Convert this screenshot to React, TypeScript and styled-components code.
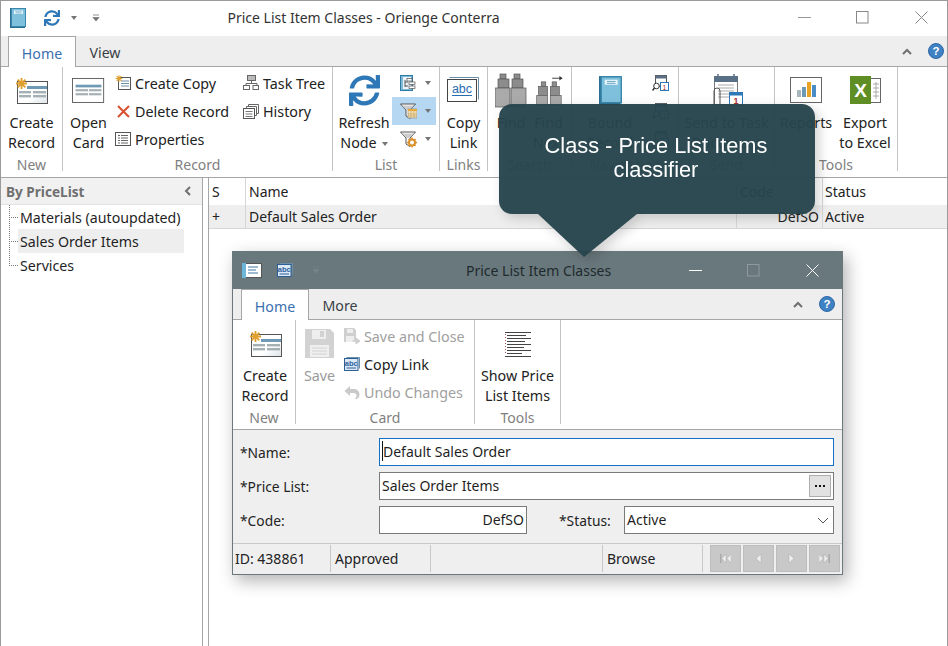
import React from "react";
import styled, { createGlobalStyle } from "styled-components";
import { FaSync } from "react-icons/fa";

const Global = createGlobalStyle`
  html, body { margin: 0; padding: 0; background: #fff; }
  body { width: 948px; height: 646px; overflow: hidden; font-family: "Noto Sans", "Open Sans", sans-serif; font-size: 14px; color: #1f1f1f; }
  * { box-sizing: border-box; }
`;

const Win = styled.div`
  position: relative; width: 948px; height: 646px; background: #fff;
  border: 1px solid #9a9a9a; border-bottom: 0; display: flex; flex-direction: column; overflow: hidden;
`;
const TitleBar = styled.div<{ $h: number; $bg: string; $pb?: number }>`
  height: ${(p) => p.$h}px; flex: none; background: ${(p) => p.$bg}; display: flex; align-items: center; position: relative;
  padding-bottom: ${(p) => p.$pb ?? 0}px;
`;
const QuickTools = styled.div<{ $w: number }>`
  width: ${(p) => p.$w}px; display: flex; align-items: center; flex: none;
`;
const QuickSlot = styled.span<{ $w: number }>`
  width: ${(p) => p.$w}px; display: flex; justify-content: center; flex: none;
`;
const TitleText = styled.div<{ $w: number; $c: string }>`
  width: ${(p) => p.$w}px; flex: none; text-align: center; color: ${(p) => p.$c}; font-size: 14px; white-space: nowrap;
`;
const Caption = styled.div`
  margin-left: auto; display: flex; align-items: center; height: 100%;
`;
const CaptionBtn = styled.span<{ $w: number }>`
  width: ${(p) => p.$w}px; display: flex; justify-content: center; align-items: center;
`;
const TabStrip = styled.div<{ $h: number; $pad: number }>`
  height: ${(p) => p.$h}px; flex: none; background: #eeeeee; border-bottom: 1px solid #a6a6a6;
  display: flex; align-items: flex-end; padding-left: ${(p) => p.$pad}px;
`;
const Tab = styled.div<{ $active?: boolean; $w: number }>`
  width: ${(p) => p.$w}px; height: calc(100% + 1px); margin-bottom: -1px; display: flex; align-items: center; justify-content: center;
  font-size: 14.2px; padding-top: 2px;
  color: ${(p) => (p.$active ? "#3b6fb0" : "#3a3f46")};
  background: ${(p) => (p.$active ? "#fff" : "transparent")};
  ${(p) => (p.$active ? "border: 1px solid #a6a6a6; border-bottom: 0;" : "")}
`;
const TabRight = styled.div<{ $r: number }>`
  margin-left: auto; align-self: center; display: flex; align-items: center; gap: 16px; padding-right: ${(p) => p.$r}px;
`;
const Ribbon = styled.div<{ $h: number }>`
  height: ${(p) => p.$h}px; flex: none; border-bottom: 1px solid #a6a6a6; background: #fff; display: flex; align-items: flex-start; overflow: hidden;
`;
const Group = styled.div<{ $w: number }>`
  width: ${(p) => p.$w}px; height: 104px; flex: none; border-right: 1px solid #c4c4c4; display: flex; flex-direction: column;
`;
const GroupBody = styled.div`
  flex: 1; min-height: 0; display: flex; align-items: flex-start; white-space: nowrap;
`;
const GroupLabel = styled.div`
  height: 12px; flex: none; text-align: center; color: #7f7f7f; font-size: 14px; line-height: 12px;
`;
const BigBtn = styled.div<{ $w: number; $off?: boolean; $pl?: number }>`
  width: ${(p) => p.$w}px; flex: none; display: flex; flex-direction: column; align-items: center;
  padding-left: ${(p) => p.$pl ?? 0}px;
  color: ${(p) => (p.$off ? "#9a9a9a" : "#222")};
`;
const BigLabel = styled.div`
  font-size: 14.3px; line-height: 20px; text-align: center;
`;
const BigIcon = styled.div`
  height: 46px; width: 100%; display: flex; align-items: center; justify-content: center; flex: none;
`;
const SmallCol = styled.div<{ $w: number }>`
  width: ${(p) => p.$w}px; flex: none; display: flex; flex-direction: column; padding-top: 2px;
`;
const SmallRow = styled.div<{ $off?: boolean; $hl?: boolean }>`
  height: 28px; display: flex; align-items: center; gap: 3px; font-size: 14.3px; color: ${(p) => (p.$off ? "#a0a0a0" : "#222")};
  background: ${(p) => (p.$hl ? "#b5d7f1" : "transparent")};
`;
const SmallIcon = styled.span<{ $ml?: number }>`
  width: 18px; height: 18px; flex: none; display: flex; align-items: center; justify-content: center; margin-left: ${(p) => p.$ml ?? 0}px;
`;
const DropMark = styled.span<{ $ml: number }>`
  width: 0; height: 0; border-left: 3.5px solid transparent; border-right: 3.5px solid transparent; border-top: 4px solid #757575; margin-left: ${(p) => p.$ml}px; flex: none;
  display: inline-block; vertical-align: middle;
`;
const Main = styled.div`
  flex: 1; min-height: 0; display: flex;
`;
const Side = styled.div`
  width: 202px; flex: none; border-right: 1px solid #a6a6a6; display: flex; flex-direction: column;
`;
const SideHead = styled.div`
  height: 27px; flex: none; background: #f1f1f1; border-bottom: 1px solid #e2e2e2; display: flex; align-items: center; justify-content: space-between;
  padding: 0 11px 0 5px; font-weight: 700; color: #6f6f6f; font-size: 13.6px;
`;
const Tree = styled.div`
  padding-left: 8px; padding-right: 18px;
`;
const TreeRow = styled.div`
  height: 24px; display: flex; align-items: center; font-size: 14.2px; color: #1f1f1f;
`;
const Connector = styled.span<{ $last?: boolean }>`
  width: 9px; align-self: stretch; flex: none;
  background-image:
    repeating-linear-gradient(to bottom, #777 0 1px, transparent 1px 2px),
    repeating-linear-gradient(to right, #777 0 1px, transparent 1px 2px);
  background-size: 1px ${(p) => (p.$last ? "50%" : "100%")}, 100% 1px;
  background-position: 0 0, 0 50%;
  background-repeat: no-repeat;
`;
const TreeText = styled.span<{ $sel?: boolean }>`
  flex: 1; align-self: stretch; display: flex; align-items: center; padding-left: 2px; background: ${(p) => (p.$sel ? "#eeeeee" : "transparent")};
`;
const Grid = styled.div`
  flex: 1; margin-left: 5px; border-left: 1px solid #a6a6a6; min-width: 0;
`;
const GridRow = styled.div<{ $head?: boolean }>`
  display: grid; grid-template-columns: 37px 491px 86px 1fr; height: ${(p) => (p.$head ? 27 : 24)}px;
  background: ${(p) => (p.$head ? "#fff" : "#eeeeee")}; border-bottom: ${(p) => (p.$head ? "none" : "1px solid #d6d6d6")};
`;
const Cell = styled.div<{ $right?: boolean }>`
  border-right: 1px solid #d6d6d6; display: flex; align-items: center; padding: 0 3px 0 3px; font-size: 14px; color: #222;
  justify-content: ${(p) => (p.$right ? "flex-end" : "flex-start")};
  &:last-child { border-right: 0; padding-left: 2px; }
`;
const Bubble = styled.div`
  position: absolute; left: 498px; top: 103px; width: 316px; height: 110px; border-radius: 13px;
  background: rgba(38, 69, 77, 0.96); color: #fff; font-family: "Liberation Sans", Arial, sans-serif; font-size: 21.8px; line-height: 24px;
  text-align: center; padding: 30px 2px 0 0; z-index: 3;
  filter: drop-shadow(4px 4px 6px rgba(0,0,0,.18));
  &::after {
    content: ""; position: absolute; left: 39px; top: 110px; width: 0; height: 0;
    border-left: 46px solid transparent; border-right: 53px solid transparent; border-top: 43px solid rgba(38, 69, 77, 0.96);
  }
`;
const Dialog = styled.div`
  position: absolute; left: 231px; top: 250px; width: 611px; height: 324px; background: #efefef; border: 1px solid #6a787c; border-top: 0;
  box-shadow: 4px 6px 16px rgba(0,0,0,.3); display: flex; flex-direction: column; z-index: 2;
`;
const Form = styled.div`
  flex: 1; min-height: 0; padding: 8px 8px 0 7px; display: flex; flex-direction: column; gap: 6px; background: #efefef;
`;
const FormRow = styled.div`
  height: 28px; display: flex; align-items: center;
`;
const FieldLabel = styled.div<{ $w: number; $pl?: number }>`
  width: ${(p) => p.$w}px; flex: none; font-size: 13.8px; color: #222; padding-left: ${(p) => p.$pl ?? 0}px;
`;
const Input = styled.div<{ $w?: number; $focus?: boolean; $right?: boolean }>`
  ${(p) => (p.$w ? `width:${p.$w}px;flex:none;` : "flex:1;")}
  height: 28px; background: #fff; border: 1px solid ${(p) => (p.$focus ? "#0f72c4" : "#7a7a7a")}; display: flex; align-items: center;
  padding: 0 2px 2px 2px; font-size: 14px; color: #1f1f1f; justify-content: ${(p) => (p.$right ? "flex-end" : "space-between")};
`;
const InputValue = styled.span`
  display: flex; align-items: center;
`;
const Caret = styled.span`
  width: 1px; height: 20px; background: #111; flex: none;
`;
const Lookup = styled.span`
  width: 22px; height: 22px; background: #e1e1e1; border: 1px solid #adadad; display: flex; align-items: center; justify-content: center; gap: 2px; flex: none; margin-bottom: -2px;
`;
const Dot = styled.i`
  width: 2px; height: 2px; background: #111; display: block;
`;
const StatusBar = styled.div`
  height: 31px; flex: none; border-top: 1px solid #c8c8c8; display: flex; align-items: stretch;
`;
const StatusCell = styled.div<{ $w: number; $pl?: number }>`
  width: ${(p) => p.$w}px; flex: none; margin: 1px 0 2px; border-right: 1px solid #c8c8c8; display: flex; align-items: center;
  padding-left: ${(p) => p.$pl ?? 4}px; font-size: 14px; color: #222; white-space: nowrap;
`;
const NavGroup = styled.div`
  display: flex; gap: 2px; padding: 1px 0 2px 7px;
`;
const NavBtn = styled.span`
  width: 31px; height: 27px; background: #c8c8c8; border: 1px solid #bdbdbd; display: flex; align-items: center; justify-content: center;
`;

/* ---------- icons ---------- */
const Book = ({ w, h }: { w: number; h: number }) => (
  <svg width={w} height={h} viewBox="0 0 16 20" style={{ display: "block" }}>
    <rect x="0" y="0" width="15" height="20" fill="#2a6f92" />
    <rect x="1.500" y=".5" width="14" height="18" fill="#7fc0dc" stroke="#3a87ab" />
    <rect x="4" y="2.500" width="9" height="3.500" fill="#e8f5fb" />
    <path d="M5.500 3.700h6M5.500 5h6" stroke="#5a9cbb" strokeWidth=".6" />
  </svg>
);
const Refresh = ({ size }: { size: number }) => <FaSync size={size} color="#2f78b7" />;
const Star = ({ x, y, r }: { x: number; y: number; r: number }) => (
  <g stroke="#e0a030" strokeWidth={r * 0.34} transform={`translate(${x} ${y})`}>
    <path d={`M${-r} 0H${r}M0 ${-r}V${r}M${-r * 0.7} ${-r * 0.7}L${r * 0.7} ${r * 0.7}M${-r * 0.7} ${r * 0.7}L${r * 0.7} ${-r * 0.7}`} />
  </g>
);
const NewRecord = () => (
  <svg width="33" height="27" viewBox="0 0 33 27">
    <defs><linearGradient id="g1" x1="0" y1="0" x2="1" y2="1"><stop offset=".6" stopColor="#fff" /><stop offset="1" stopColor="#dde4ea" /></linearGradient></defs>
    <rect x="2.500" y="4.500" width="30" height="22" fill="url(#g1)" stroke="#555" />
    <g transform="translate(-1 2)"><rect x="13" y="7" width="20" height="3" fill="#6f9ab5" /><rect x="5" y="12" width="12" height="2.400" fill="#a4b0b4" /><rect x="19" y="12" width="13" height="2.400" fill="#a4b0b4" /><rect x="5" y="16" width="12" height="2.400" fill="#a4b0b4" /><rect x="19" y="16" width="13" height="2.400" fill="#a4b0b4" /></g>
    <Star x={6.500} y={6.500} r={5.500} />
  </svg>
);
const OpenCard = () => (
  <svg width="33" height="27" viewBox="0 0 37 30">
    <rect x=".5" y="1.500" width="35" height="27" fill="#fff" stroke="#555" />
    <rect x="4" y="8.500" width="29" height="3" fill="#6f9ab5" />
    <rect x="4" y="13.500" width="14" height="2.400" fill="#a4b0b4" /><rect x="19" y="13.500" width="14" height="2.400" fill="#a4b0b4" />
    <rect x="4" y="18" width="14" height="2.400" fill="#a4b0b4" /><rect x="19" y="18" width="14" height="2.400" fill="#a4b0b4" />
  </svg>
);
const CreateCopy = () => (
  <svg width="17" height="16" viewBox="0 0 17 16">
    <rect x="3.500" y="2.500" width="12" height="12" fill="#fff" stroke="#555" />
    <path d="M6 6h8M6 8.500h8M6 11h8" stroke="#6f8fa5" />
    <Star x={4} y={3.500} r={3.300} />
  </svg>
);
const XMark = () => (
  <svg width="15" height="15" viewBox="0 0 15 15"><path d="M2 2l11 11M13 2L2 13" stroke="#d9502e" strokeWidth="2" /></svg>
);
const Props = () => (
  <svg width="16" height="14" viewBox="0 0 16 14">
    <rect x=".5" y=".5" width="15" height="13" fill="#fff" stroke="#555" />
    <path d="M3 3.500h2M6 3.500h7M3 6h2M6 6h7M3 8.500h2M6 8.500h7M3 11h2M6 11h7" stroke="#666" />
  </svg>
);
const TaskTree = () => (
  <svg width="16" height="16" viewBox="0 0 16 16">
    <rect x="4.500" y=".5" width="8" height="5" fill="#bbb" stroke="#666" />
    <path d="M8.500 5.500v3M3 10.500v-2h11v2" fill="none" stroke="#666" />
    <rect x=".5" y="10.500" width="6" height="4" fill="#fff" stroke="#666" /><rect x="10" y="10.500" width="5.500" height="4" fill="#fff" stroke="#666" />
  </svg>
);
const History = () => (
  <svg width="16" height="15" viewBox="0 0 16 15">
    <path d="M5.500 2.500V.5h10v9h-2" fill="none" stroke="#666" /><path d="M3.500 4.500v-2h10v9h-2" fill="#fff" stroke="#666" />
    <rect x=".5" y="4.500" width="11" height="10" fill="#fff" stroke="#555" />
    <path d="M2.500 7.500h7M2.500 10h7M2.500 12.500h7" stroke="#777" />
  </svg>
);
const TreeDoc = () => (
  <svg width="16" height="16" viewBox="0 0 16 16">
    <rect x=".5" y=".5" width="12" height="15" fill="#7fbbd8" stroke="#2e7aa3" />
    <rect x="3" y="2" width="8" height="12" fill="#eaf4f9" />
    <path d="M5 5v7M5 7h3M5 11h3" stroke="#555" fill="none" />
    <rect x="7" y="3.500" width="5" height="2.500" fill="#fff" stroke="#555" strokeWidth=".7" />
    <rect x="9" y="7" width="6" height="2.500" fill="#fff" stroke="#555" strokeWidth=".7" />
    <rect x="9" y="11" width="6" height="2.500" fill="#fff" stroke="#555" strokeWidth=".7" />
  </svg>
);
const FilterTable = () => (
  <svg width="17" height="17" viewBox="0 0 17 17">
    <path d="M.5 1h15L10 7v8.500L6 13V7z" fill="#fff" stroke="#555" />
    <path d="M2 2.500h12L9 7H7z" fill="#ccc" />
    <rect x="8" y="6" width="9" height="9" fill="#f2e2b8" stroke="#888" strokeWidth=".6" />
    <rect x="8" y="6" width="9" height="2" fill="#e6a83a" />
    <path d="M11 8v7M14 8v7M8 11h9M8 13h9" stroke="#c9a560" strokeWidth=".7" />
  </svg>
);
const FilterGear = () => (
  <svg width="17" height="17" viewBox="0 0 17 17">
    <path d="M.5 1h15L10 7v8.500L6 13V7z" fill="#fff" stroke="#555" />
    <path d="M2 2.500h12L9 7H7z" fill="#ccc" />
    <circle cx="12" cy="11.500" r="3" fill="#fff" stroke="#d9902a" strokeWidth="2" />
    <path d="M12 6.500v2M12 14.500v2M7 11.500h2M15 11.500h2M8.500 8l1.500 1.500M14 13.500l1.500 1.500M15.500 8L14 9.500M10 13.500L8.500 15" stroke="#d9902a" strokeWidth="1.400" />
  </svg>
);
const AbcBig = () => (
  <svg width="33" height="28" viewBox="0 0 33 28">
    <path d="M2.500 1.500h29v22" fill="none" stroke="#6a8ea8" />
    <rect x=".5" y="3.500" width="29" height="22" fill="#fff" stroke="#444" />
    <text x="15" y="17" textAnchor="middle" fontFamily="Liberation Sans, sans-serif" fontSize="12.500" fill="#2a6bb0">abc</text>
    <path d="M5 19.500h20" stroke="#2a6bb0" />
  </svg>
);
const AbcSmall = () => (
  <svg width="16" height="16" viewBox="0 0 16 16">
    <path d="M2.500 1.500h13v11" fill="none" stroke="#6a8ea8" />
    <rect x=".5" y="2.500" width="13.500" height="12" fill="#dce9f5" stroke="#2c5f95" />
    <text x="7.200" y="10.300" textAnchor="middle" fontFamily="Liberation Sans, sans-serif" fontSize="7.500" fontWeight="700" fill="#2a5f9e">abc</text>
    <path d="M2.500 12h9.500" stroke="#2a5f9e" />
  </svg>
);
const Binoculars = ({ arrow }: { arrow?: boolean }) => (
  <svg width="32" height="36" viewBox="0 -2 32 36">
    {arrow && <g><path d="M20 3h11" stroke="#333" /><path d="M28 .5l3.500 2.500-3.500 2.500z" fill="#333" /></g>}
    <g fill="#8c8c8c" stroke="#555" strokeWidth=".7">
      {arrow ? (
        <>
          <rect x="8" y="7" width="5" height="5" /><rect x="20" y="7" width="5" height="5" />
          <rect x="5" y="12" width="10" height="10" /><rect x="18" y="12" width="10" height="10" />
          <rect x="3" y="22" width="12" height="11" fill="#aaa" /><rect x="18" y="22" width="12" height="11" fill="#aaa" />
        </>
      ) : (
        <>
          <rect x="5" y="0" width="6" height="5" /><rect x="19" y="0" width="6" height="5" />
          <rect x="3" y="5" width="11" height="9" /><rect x="17" y="5" width="11" height="9" />
          <rect x="0" y="14" width="15" height="19" fill="#aaa" /><rect x="16" y="14" width="15" height="19" fill="#aaa" />
        </>
      )}
    </g>
  </svg>
);
const CalSearch = () => (
  <svg width="17" height="17" viewBox="0 0 17 17">
    <rect x="3.500" y=".5" width="11" height="11" fill="#fff" stroke="#555" /><rect x="3.500" y=".5" width="11" height="3" fill="#5a7086" />
    <rect x="8.500" y="7.500" width="8" height="8" fill="#fff" stroke="#2f78b7" /><text x="12.500" y="14.500" fontSize="7" textAnchor="middle" fontFamily="Liberation Sans, sans-serif" fill="#a33">1</text>
    <circle cx="4.500" cy="11" r="2.800" fill="#fff" stroke="#333" /><path d="M2.500 13L.5 15.500" stroke="#333" strokeWidth="1.500" />
  </svg>
);
const SendTask = () => (
  <svg width="32" height="33" viewBox="0 0 32 33">
    <rect x="3.500" y="2.500" width="23" height="28" fill="#fff" stroke="#777" />
    <rect x="3" y="2" width="24" height="6" rx="1" fill="#5a7086" />
    <path d="M7 0v4M23 0v4" stroke="#5a7086" strokeWidth="1.500" />
    <path d="M7 11h16M7 14h16M7 17h16M7 20h16M7 23h16" stroke="#aaa" />
    <rect x="18.500" y="18.500" width="13" height="13" fill="#fff" stroke="#2f78b7" /><rect x="18" y="18" width="14" height="3.500" fill="#2f78b7" />
    <text x="25" y="29.500" fontSize="9" textAnchor="middle" fontFamily="Liberation Sans, sans-serif" fontWeight="700" fill="#a33">1</text>
    <path d="M3 32V17a3 3 0 0 1 6 0v14" fill="none" stroke="#555" />
  </svg>
);
const Reports = () => (
  <svg width="33" height="27" viewBox="0 0 33 27">
    <rect x=".5" y=".5" width="31" height="25" fill="#fff" stroke="#666" />
    <rect x="7" y="13" width="4" height="7" fill="#a7b5bd" /><rect x="12" y="10" width="4" height="10" fill="#6f9ab5" />
    <rect x="17" y="5" width="4" height="15" fill="#e9a322" /><rect x="22" y="8" width="4" height="12" fill="#4a8dc6" />
  </svg>
);
const Excel = () => (
  <svg width="31" height="28" viewBox="0 0 31 28">
    <rect x="20.500" y="2.500" width="10" height="24" fill="#fff" stroke="#666" />
    <path d="M23 8h6M23 12h6M23 16h6M23 20h6M26 6v17" stroke="#999" strokeWidth=".8" />
    <rect x="0" y="0" width="21" height="28" fill="#5f8f24" />
    <text x="10.500" y="20.500" fontSize="19" fontWeight="700" textAnchor="middle" fontFamily="Liberation Sans, sans-serif" fill="#fff">X</text>
  </svg>
);
const Chevron = () => (
  <svg width="10" height="7" viewBox="0 0 10 7" style={{ display: "block" }}><path d="M1 6l4-4 4 4" fill="none" stroke="#6f6f6f" strokeWidth="2" /></svg>
);
const Help = () => (
  <svg width="16" height="16" viewBox="0 0 16 16" style={{ display: "block" }}>
    <circle cx="8" cy="8" r="7.500" fill="#3f82c4" stroke="#2d69a6" />
    <text x="8" y="12" textAnchor="middle" fontSize="11.500" fontWeight="700" fontFamily="Liberation Sans, sans-serif" fill="#fff">?</text>
  </svg>
);
const Minimize = ({ c }: { c: string }) => (
  <svg width="13" height="3" viewBox="0 0 13 3" style={{ display: "block" }}><path d="M0 1.500h13" stroke={c} /></svg>
);
const Maximize = ({ c }: { c: string }) => (
  <svg width="13" height="13" viewBox="0 0 13 13" style={{ display: "block" }}><rect x=".5" y=".5" width="11.500" height="11.500" fill="none" stroke={c} /></svg>
);
const Close = ({ c }: { c: string }) => (
  <svg width="13" height="13" viewBox="0 0 13 13" style={{ display: "block" }}><path d="M.5.5l12 12M12.500.5l-12 12" stroke={c} /></svg>
);
const CardDoc = () => (
  <svg width="21" height="15" viewBox="0 0 21 15" style={{ display: "block" }}>
    <rect x=".5" y=".5" width="19" height="14" fill="#fff" stroke="#555" />
    <rect x="0" y="0" width="4" height="15" fill="#6cb6da" />
    <path d="M6 4h10M6 7h8M6 10h10" stroke="#3a78a8" />
  </svg>
);
const Floppy = () => (
  <svg width="29" height="29" viewBox="0 0 29 29">
    <path d="M0 0h25l4 4v25H0z" fill="#d2d2d2" />
    <rect x="7" y="1" width="14" height="9" fill="#eee" /><rect x="15" y="2" width="4" height="6" fill="#d2d2d2" />
    <rect x="5" y="16" width="19" height="12" fill="#efefef" />
    <path d="M7 19h15M7 22h15M7 25h15" stroke="#d2d2d2" />
  </svg>
);
const FloppySmall = () => (
  <svg width="17" height="17" viewBox="0 0 17 17">
    <path d="M0 0h10l2 2v12H0z" fill="#cfcfcf" /><rect x="3" y="1" width="6" height="4" fill="#eee" /><rect x="2" y="8" width="8" height="6" fill="#eee" />
    <path d="M8 13h7M12 10l4 3-4 3z" fill="#cfcfcf" stroke="#cfcfcf" />
  </svg>
);
const Undo = () => (
  <svg width="16" height="15" viewBox="0 0 16 15">
    <path d="M6 1L.5 6 6 11V8h3.500c2 0 3 1 3 2.500S11.500 14 10 14c4 .5 5.500-2 5.500-4.500C15.500 6 13 4 9.500 4H6z" fill="#c9c9c9" />
  </svg>
);
const Lines = () => (
  <svg width="27" height="29" viewBox="0 -2 27 29">
    <path d="M1 1.500h26M3 4.500h19M3 7.500h24M3 10.500h18M3 13.500h24M3 16.500h17M3 19.500h24M3 22.500h15M1 25.500h26" stroke="#444" />
    <path d="M1.500 3v21" stroke="#a55" strokeDasharray="1 2" />
  </svg>
);
const Nav = ({ kind }: { kind: "first" | "prev" | "next" | "last" }) => {
  const f = "#efefef";
  const g = "#aaa";
  return (
    <svg width="11" height="9" viewBox="0 0 11 9">
      {kind === "first" && <><path d="M0 0h1.500v9H0z" fill={g} /><path d="M6 0v9L2 4.500zM11 0v9L7 4.500z" fill={f} stroke={g} strokeWidth=".5" /></>}
      {kind === "prev" && <path d="M8 0v9L3 4.500z" fill={f} stroke={g} strokeWidth=".5" />}
      {kind === "next" && <path d="M3 0v9l5-4.500z" fill={f} stroke={g} strokeWidth=".5" />}
      {kind === "last" && <><path d="M9.500 0H11v9H9.500z" fill={g} /><path d="M0 0v9l4-4.500zM5 0v9l4-4.500z" fill={f} stroke={g} strokeWidth=".5" /></>}
    </svg>
  );
};
const CustomizeMark = ({ c }: { c: string }) => (
  <svg width="8" height="8" viewBox="0 0 8 8" style={{ display: "block" }}><path d="M1 1h6M1 3.500h6L4 7z" fill={c} stroke={c} strokeWidth=".8" /></svg>
);
const SideCollapse = () => (
  <svg width="7" height="10" viewBox="0 0 7 10" style={{ display: "block" }}><path d="M6 1L2 5l4 4" fill="none" stroke="#6f6f6f" strokeWidth="2" /></svg>
);
const ComboArrow = () => (
  <svg width="12" height="7" viewBox="0 0 12 7" style={{ marginRight: 2, marginBottom: -2 }}><path d="M1 1l5 5 5-5" fill="none" stroke="#555" /></svg>
);

export default function App() {
  return (
    <>
      <Global />
      <Win>
        <TitleBar $h={35} $bg="#fff" $pb={2}>
          <QuickTools $w={112}>
            <QuickSlot $w={34}><Book w={16} h={20} /></QuickSlot>
            <QuickSlot $w={34}><Refresh size={16} /></QuickSlot>
            <QuickSlot $w={10}><DropMark $ml={0} /></QuickSlot>
            <QuickSlot $w={34}><CustomizeMark c="#777" /></QuickSlot>
          </QuickTools>
          <TitleText $w={501} $c="#333">Price List Item Classes - Orienge Conterra</TitleText>
          <Caption>
            <CaptionBtn $w={50}><Minimize c="#999" /></CaptionBtn>
            <CaptionBtn $w={66}><Maximize c="#888" /></CaptionBtn>
            <CaptionBtn $w={52}><Close c="#888" /></CaptionBtn>
          </Caption>
        </TitleBar>
        <TabStrip $h={31} $pad={7}>
          <Tab $active $w={68}>Home</Tab>
          <Tab $w={58}>View</Tab>
          <TabRight $r={3}><Chevron /><Help /></TabRight>
        </TabStrip>
        <Ribbon $h={111}>
          <Group $w={62}>
            <GroupBody>
              <BigBtn $w={61}><BigIcon><NewRecord /></BigIcon><BigLabel>Create<br />Record</BigLabel></BigBtn>
            </GroupBody>
            <GroupLabel>New</GroupLabel>
          </Group>
          <Group $w={270}>
            <GroupBody>
              <BigBtn $w={51}><BigIcon><OpenCard /></BigIcon><BigLabel>Open<br />Card</BigLabel></BigBtn>
              <SmallCol $w={128}>
                <SmallRow><SmallIcon><CreateCopy /></SmallIcon>Create Copy</SmallRow>
                <SmallRow><SmallIcon><XMark /></SmallIcon>Delete Record</SmallRow>
                <SmallRow><SmallIcon><Props /></SmallIcon>Properties</SmallRow>
              </SmallCol>
              <SmallCol $w={88}>
                <SmallRow><SmallIcon><TaskTree /></SmallIcon>Task Tree</SmallRow>
                <SmallRow><SmallIcon><History /></SmallIcon>History</SmallRow>
              </SmallCol>
            </GroupBody>
            <GroupLabel>Record</GroupLabel>
          </Group>
          <Group $w={107}>
            <GroupBody>
              <BigBtn $w={59} $pl={3}><BigIcon><Refresh size={31} /></BigIcon><BigLabel>Refresh<br />Node<DropMark $ml={5} /></BigLabel></BigBtn>
              <SmallCol $w={44}>
                <SmallRow><SmallIcon $ml={7}><TreeDoc /></SmallIcon><DropMark $ml={5} /></SmallRow>
                <SmallRow $hl><SmallIcon $ml={7}><FilterTable /></SmallIcon><DropMark $ml={5} /></SmallRow>
                <SmallRow><SmallIcon $ml={7}><FilterGear /></SmallIcon><DropMark $ml={5} /></SmallRow>
              </SmallCol>
            </GroupBody>
            <GroupLabel>List</GroupLabel>
          </Group>
          <Group $w={48}>
            <GroupBody>
              <BigBtn $w={47}><BigIcon><AbcBig /></BigIcon><BigLabel>Copy<br />Link</BigLabel></BigBtn>
            </GroupBody>
            <GroupLabel>Links</GroupLabel>
          </Group>
          <Group $w={84}>
            <GroupBody>
              <BigBtn $w={46}><BigIcon><Binoculars /></BigIcon><BigLabel>Find</BigLabel></BigBtn>
              <BigBtn $w={29}><BigIcon><Binoculars arrow /></BigIcon><BigLabel>Find<br />Next</BigLabel></BigBtn>
            </GroupBody>
            <GroupLabel>Search</GroupLabel>
          </Group>
          <Group $w={107}>
            <GroupBody>
              <BigBtn $w={76}><BigIcon><Book w={23} h={29} /></BigIcon><BigLabel>Bound<br />Record</BigLabel></BigBtn>
              <SmallCol $w={30}>
                <SmallRow><SmallIcon $ml={3}><CalSearch /></SmallIcon></SmallRow>
                <SmallRow><SmallIcon $ml={3}><CalSearch /></SmallIcon></SmallRow>
                <SmallRow><SmallIcon $ml={3}><CalSearch /></SmallIcon></SmallRow>
              </SmallCol>
            </GroupBody>
            <GroupLabel>Navigation</GroupLabel>
          </Group>
          <Group $w={96}>
            <GroupBody>
              <BigBtn $w={95}><BigIcon><SendTask /></BigIcon><BigLabel>Send to Task<br />Document</BigLabel></BigBtn>
            </GroupBody>
            <GroupLabel>Send</GroupLabel>
          </Group>
          <Group $w={123}>
            <GroupBody>
              <BigBtn $w={62}><BigIcon><Reports /></BigIcon><BigLabel>Reports</BigLabel></BigBtn>
              <BigBtn $w={56}><BigIcon><Excel /></BigIcon><BigLabel>Export<br />to Excel</BigLabel></BigBtn>
            </GroupBody>
            <GroupLabel>Tools</GroupLabel>
          </Group>
        </Ribbon>
        <Main>
          <Side>
            <SideHead>By PriceList<SideCollapse /></SideHead>
            <Tree>
              <TreeRow><Connector /><TreeText>Materials (autoupdated)</TreeText></TreeRow>
              <TreeRow><Connector /><TreeText $sel>Sales Order Items</TreeText></TreeRow>
              <TreeRow><Connector $last /><TreeText>Services</TreeText></TreeRow>
            </Tree>
          </Side>
          <Grid>
            <GridRow $head><Cell>S</Cell><Cell>Name</Cell><Cell>Code</Cell><Cell>Status</Cell></GridRow>
            <GridRow><Cell>+</Cell><Cell>Default Sales Order</Cell><Cell $right>DefSO</Cell><Cell>Active</Cell></GridRow>
          </Grid>
        </Main>

        <Bubble>Class - Price List Items<br />classifier</Bubble>

        <Dialog>
          <TitleBar $h={38} $bg="#69787c">
            <QuickTools $w={233}>
              <QuickSlot $w={38}><CardDoc /></QuickSlot>
              <QuickSlot $w={28}><AbcSmall /></QuickSlot>
              <QuickSlot $w={34}><CustomizeMark c="#75848a" /></QuickSlot>
            </QuickTools>
            <TitleText $w={142} $c="#1f2a2e">Price List Item Classes</TitleText>
            <Caption>
              <CaptionBtn $w={58}><Minimize c="#fff" /></CaptionBtn>
              <CaptionBtn $w={58}><Maximize c="#8d9a9e" /></CaptionBtn>
              <CaptionBtn $w={60}><Close c="#fff" /></CaptionBtn>
            </Caption>
          </TitleBar>
          <TabStrip $h={31} $pad={8}>
            <Tab $active $w={68}>Home</Tab>
            <Tab $w={62}>More</Tab>
            <TabRight $r={7}><Chevron /><Help /></TabRight>
          </TabStrip>
          <Ribbon $h={110}>
            <Group $w={63}>
              <GroupBody>
                <BigBtn $w={62} $pl={2}><BigIcon><NewRecord /></BigIcon><BigLabel>Create<br />Record</BigLabel></BigBtn>
              </GroupBody>
              <GroupLabel>New</GroupLabel>
            </Group>
            <Group $w={179}>
              <GroupBody>
                <BigBtn $w={47} $off><BigIcon><Floppy /></BigIcon><BigLabel>Save</BigLabel></BigBtn>
                <SmallCol $w={130}>
                  <SmallRow $off><SmallIcon><FloppySmall /></SmallIcon>Save and Close</SmallRow>
                  <SmallRow><SmallIcon><AbcSmall /></SmallIcon>Copy Link</SmallRow>
                  <SmallRow $off><SmallIcon><Undo /></SmallIcon>Undo Changes</SmallRow>
                </SmallCol>
              </GroupBody>
              <GroupLabel>Card</GroupLabel>
            </Group>
            <Group $w={86}>
              <GroupBody>
                <BigBtn $w={85}><BigIcon><Lines /></BigIcon><BigLabel>Show Price<br />List Items</BigLabel></BigBtn>
              </GroupBody>
              <GroupLabel>Tools</GroupLabel>
            </Group>
          </Ribbon>
          <Form>
            <FormRow><FieldLabel $w={139}>*Name:</FieldLabel><Input $focus><InputValue><Caret />Default Sales Order</InputValue></Input></FormRow>
            <FormRow><FieldLabel $w={139}>*Price List:</FieldLabel><Input>Sales Order Items<Lookup><Dot /><Dot /><Dot /></Lookup></Input></FormRow>
            <FormRow>
              <FieldLabel $w={139}>*Code:</FieldLabel>
              <Input $w={148} $right>DefSO</Input>
              <FieldLabel $w={97} $pl={32}>*Status:</FieldLabel>
              <Input>Active<ComboArrow /></Input>
            </FormRow>
          </Form>
          <StatusBar>
            <StatusCell $w={98} $pl={2}>ID: 438861</StatusCell>
            <StatusCell $w={100}>Approved</StatusCell>
            <StatusCell $w={172}>&nbsp;</StatusCell>
            <StatusCell $w={100}>Browse</StatusCell>
            <NavGroup>
              <NavBtn><Nav kind="first" /></NavBtn>
              <NavBtn><Nav kind="prev" /></NavBtn>
              <NavBtn><Nav kind="next" /></NavBtn>
              <NavBtn><Nav kind="last" /></NavBtn>
            </NavGroup>
          </StatusBar>
        </Dialog>
      </Win>
    </>
  );
}
